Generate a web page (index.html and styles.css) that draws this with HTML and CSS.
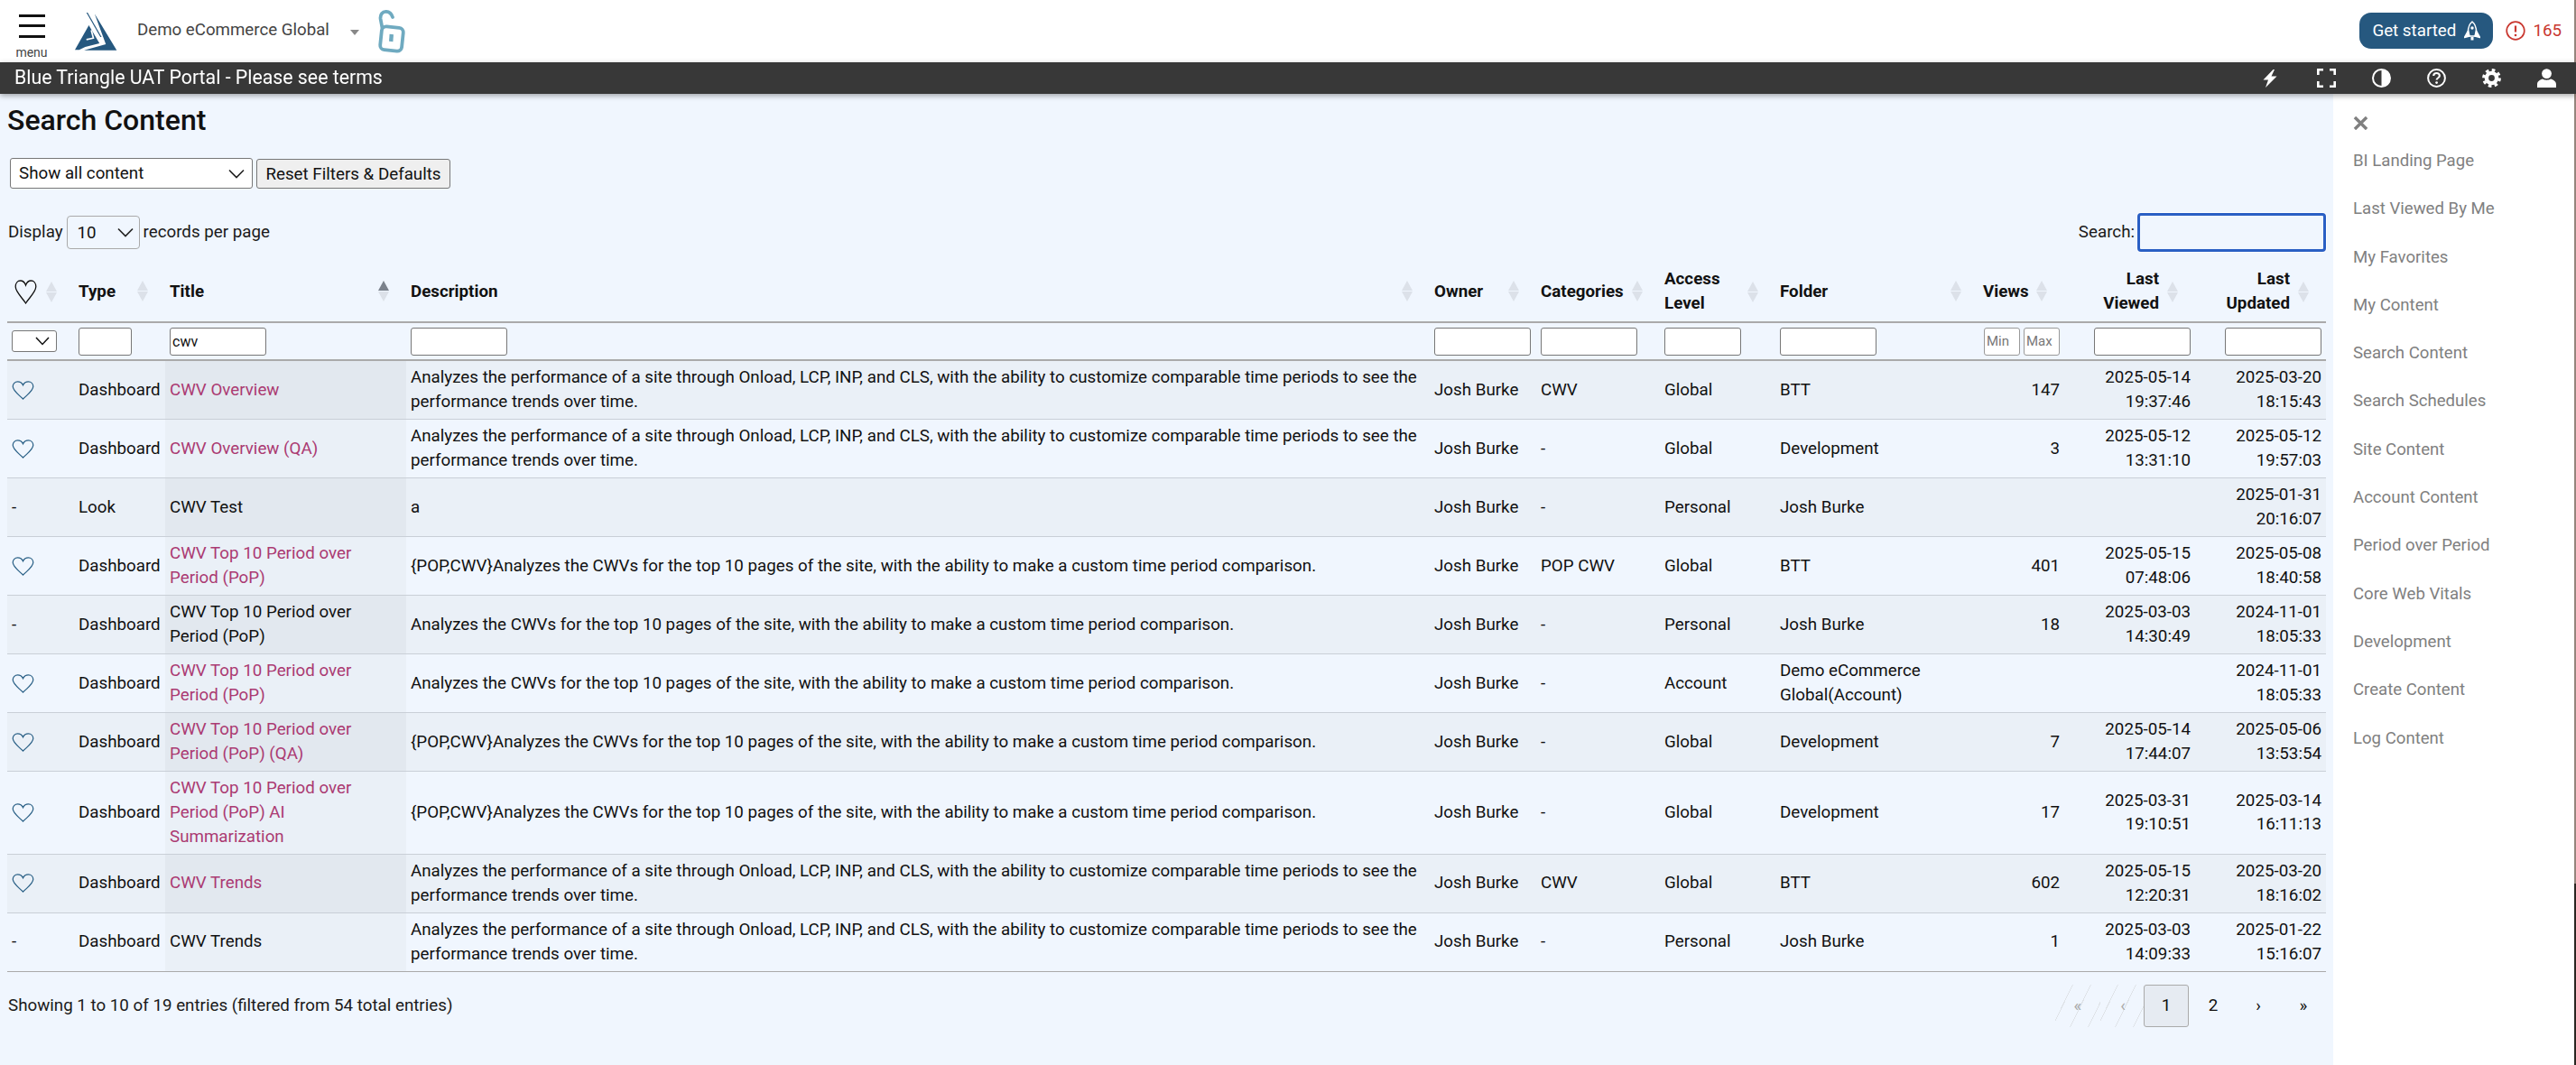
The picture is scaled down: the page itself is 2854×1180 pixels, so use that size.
FILE: index.html
```html
<!DOCTYPE html>
<html lang="en">
<head>
<meta charset="utf-8">
<title>Search Content</title>
<link rel="stylesheet" href="styles.css">
</head>
<body>
<svg class="defs" aria-hidden="true">
  <symbol id="heart" viewBox="0 0 26 22"><path d="M13 21 C8 16 1.2 11.5 1.2 6.6 C1.2 3.2 3.8 1 6.8 1 C9.4 1 11.8 2.6 13 5 C14.2 2.6 16.6 1 19.2 1 C22.2 1 24.8 3.2 24.8 6.6 C24.8 11.5 18 16 13 21 Z" fill="none" stroke="currentColor" stroke-width="1.3"/></symbol>
  <symbol id="heart-tall" viewBox="0 0 25 27" preserveAspectRatio="none"><path d="M12.5 26 C8 19 1.2 13.5 1.2 7.6 C1.2 3.6 3.6 1 6.6 1 C9.2 1 11.4 3 12.5 6 C13.6 3 15.8 1 18.4 1 C21.4 1 23.8 3.6 23.8 7.6 C23.8 13.5 17 19 12.5 26 Z" fill="none" stroke="currentColor" stroke-width="1.3"/></symbol>
  <symbol id="sort" viewBox="0 0 12 23"><polygon points="6,0 12,11 0,11" fill="#dce1e9"/><polygon points="0,12 12,12 6,23" fill="#dce1e9"/></symbol>
  <symbol id="sort-up" viewBox="0 0 12 23"><polygon points="6,0 12,11 0,11" fill="#7b828c"/><polygon points="0,12 12,12 6,23" fill="#dce1e9"/></symbol>
</svg>

<header class="topbar">
  <div class="menu">
    <span class="burger"><i></i><i></i><i></i></span>
    <span class="menu-label">menu</span>
  </div>
  <svg class="logo" viewBox="70 42 140 125">
    <polygon points="135,46 208,166 100,166 172,146" fill="#26587f"/>
    <polygon points="70,165 116,84 151,143 104,155 84,165" fill="#26587f"/>
    <polygon points="108,42 112,42 158,122 154,122" fill="#26587f"/>
    <path d="M124 100 L131 126 L108 131" fill="none" stroke="#fff" stroke-width="5"/>
  </svg>
  <span class="account">Demo eCommerce Global</span>
  <span class="caret"></span>
  <svg class="lock" viewBox="0 0 30 48" fill="none" stroke="#6faac0" stroke-width="3.8" stroke-linecap="round" stroke-linejoin="round">
    <path d="M4.5 20 L2.6 10 C2 4.5 5 2 8.5 1.9 C12 1.8 14.5 3.5 16 8"/>
    <rect x="3" y="19" width="24" height="26" rx="5" transform="rotate(6 15 32)"/>
    <path d="M14.8 27 L14.2 35" stroke-width="4.4" stroke-linecap="butt"/>
  </svg>
  <button class="get-started" type="button">Get started
    <svg class="rocket" viewBox="0 0 18 22" fill="none" stroke="#fff" stroke-width="1.5" stroke-linejoin="round">
      <path d="M9 1 C5.5 4 4.5 8 4.5 12 L5.5 17 H12.5 L13.5 12 C13.5 8 12.5 4 9 1 Z"/>
      <path d="M4.5 11 L.5 18.5 L6 17 Z M13.5 11 L17.5 18.5 L12 17 Z" fill="#fff"/>
      <circle cx="9" cy="8" r="1.7" fill="#fff" stroke="none"/>
      <path d="M7.5 18 H10.5 V21.5 H7.5 Z" fill="#fff" stroke="none"/>
    </svg>
  </button>
  <span class="alerts">
    <svg class="alert-icon" viewBox="0 0 22 22" fill="none" stroke="#c9372f" stroke-width="1.7"><circle cx="11" cy="11" r="9.8"/><path d="M11 5.5 V12.5" stroke-width="2.2"/><circle cx="11" cy="16" r="1.3" fill="#c9372f" stroke="none"/></svg>
    <span>165</span>
  </span>
</header>

<div class="darkbar">
  <span class="portal">Blue Triangle UAT Portal - Please see terms</span>
  <nav class="tools">
    <svg class="tool bolt" viewBox="0 0 16 20"><path d="M11.5 0 L.5 11.5 H6 L3 20 L15.5 7.5 H9.5 L13 0 Z" fill="#fff"/></svg>
    <svg class="tool" viewBox="0 0 21 21" fill="none" stroke="#fff" stroke-width="2.6"><path d="M1.3 7 V1.3 H7 M14 1.3 H19.7 V7 M19.7 14 V19.7 H14 M7 19.7 H1.3 V14"/></svg>
    <svg class="tool" viewBox="0 0 21 21"><circle cx="10.5" cy="10.5" r="9.5" fill="none" stroke="#fff" stroke-width="2"/><path d="M10.5 1 A9.5 9.5 0 0 1 10.5 20 Z" fill="#fff"/></svg>
    <svg class="tool" viewBox="0 0 21 21" fill="none" stroke="#fff"><circle cx="10.5" cy="10.5" r="9.4" stroke-width="2"/><path d="M7.2 8 C7.2 5.8 9 5 10.5 5 C12.4 5 13.9 6.2 13.9 8 C13.9 10.2 10.6 10.3 10.6 12.6" stroke-width="2.1"/><circle cx="10.6" cy="15.6" r="1.4" fill="#fff" stroke="none"/></svg>
    <svg class="tool" viewBox="0 0 21 21" fill="none" stroke="#fff"><circle cx="10.5" cy="10.5" r="5.6" stroke-width="4.4"/><circle cx="10.5" cy="10.5" r="8.9" stroke-width="3" stroke-dasharray="3.6 3.39"/></svg>
    <svg class="tool" viewBox="0 0 21 21" fill="#fff"><circle cx="10.5" cy="5.6" r="5.4"/><path d="M0 21 V17.5 C0 14 3.5 12.4 6 11.6 C8.5 13.2 12.5 13.2 15 11.6 C17.5 12.4 21 14 21 17.5 V21 Z"/></svg>
  </nav>
</div>

<div class="page">
  <main class="content">
    <h1>Search Content</h1>
    <div class="filters">
      <select class="select show-all"><option>Show all content</option></select>
      <button class="reset" type="button">Reset Filters &amp; Defaults</button>
    </div>
    <div class="controls">
      <label class="length">Display <select class="select per-page"><option>10</option></select> records per page</label>
      <label class="search">Search: <input class="search-input" type="text"></label>
    </div>

    <table class="grid">
      <colgroup>
        <col class="w-fav"><col class="w-type"><col class="w-title"><col class="w-desc"><col class="w-owner"><col class="w-cat"><col class="w-access"><col class="w-folder"><col class="w-views"><col class="w-date"><col class="w-date">
      </colgroup>
      <thead>
        <tr class="head">
          <th><div class="th"><svg class="fav-head"><use href="#heart-tall"/></svg><svg class="sort"><use href="#sort"/></svg></div></th>
          <th><div class="th"><span>Type</span><svg class="sort"><use href="#sort"/></svg></div></th>
          <th><div class="th"><span>Title</span><svg class="sort"><use href="#sort-up"/></svg></div></th>
          <th><div class="th"><span>Description</span><svg class="sort"><use href="#sort"/></svg></div></th>
          <th><div class="th"><span>Owner</span><svg class="sort"><use href="#sort"/></svg></div></th>
          <th><div class="th"><span>Categories</span><svg class="sort"><use href="#sort"/></svg></div></th>
          <th><div class="th"><span>Access<br>Level</span><svg class="sort"><use href="#sort"/></svg></div></th>
          <th><div class="th"><span>Folder</span><svg class="sort"><use href="#sort"/></svg></div></th>
          <th><div class="th"><span>Views</span><svg class="sort"><use href="#sort"/></svg></div></th>
          <th><div class="th end"><span>Last<br>Viewed</span><svg class="sort"><use href="#sort"/></svg></div></th>
          <th><div class="th end"><span>Last<br>Updated</span><svg class="sort"><use href="#sort"/></svg></div></th>
        </tr>
        <tr class="filter">
          <td><select class="mini"><option></option></select></td>
          <td><input class="f f-type" type="text"></td>
          <td><input class="f f-wide" type="text" value="cwv"></td>
          <td><input class="f f-wide" type="text"></td>
          <td><input class="f f-wide" type="text"></td>
          <td><input class="f f-wide" type="text"></td>
          <td><input class="f f-access" type="text"></td>
          <td><input class="f f-wide" type="text"></td>
          <td><span class="range"><input class="f f-range" type="text" placeholder="Min"><input class="f f-range" type="text" placeholder="Max"></span></td>
          <td class="num"><input class="f f-date" type="text"></td>
          <td class="num"><input class="f f-date" type="text"></td>
        </tr>
      </thead>
      <tbody>
        <tr>
          <td><svg class="fav"><use href="#heart"/></svg></td><td>Dashboard</td><td class="t"><a href="#">CWV Overview</a></td>
          <td>Analyzes the performance of a site through Onload, LCP, INP, and CLS, with the ability to customize comparable time periods to see the performance trends over time.</td>
          <td>Josh Burke</td><td>CWV</td><td>Global</td><td>BTT</td><td class="num">147</td><td class="num">2025-05-14 19:37:46</td><td class="num">2025-03-20 18:15:43</td>
        </tr>
        <tr>
          <td><svg class="fav"><use href="#heart"/></svg></td><td>Dashboard</td><td class="t"><a href="#">CWV Overview (QA)</a></td>
          <td>Analyzes the performance of a site through Onload, LCP, INP, and CLS, with the ability to customize comparable time periods to see the performance trends over time.</td>
          <td>Josh Burke</td><td>-</td><td>Global</td><td>Development</td><td class="num">3</td><td class="num">2025-05-12 13:31:10</td><td class="num">2025-05-12 19:57:03</td>
        </tr>
        <tr>
          <td>-</td><td>Look</td><td class="t">CWV Test</td>
          <td>a</td>
          <td>Josh Burke</td><td>-</td><td>Personal</td><td>Josh Burke</td><td class="num"></td><td class="num"></td><td class="num">2025-01-31 20:16:07</td>
        </tr>
        <tr>
          <td><svg class="fav"><use href="#heart"/></svg></td><td>Dashboard</td><td class="t"><a href="#">CWV Top 10 Period over Period (PoP)</a></td>
          <td>{POP,CWV}Analyzes the CWVs for the top 10 pages of the site, with the ability to make a custom time period comparison.</td>
          <td>Josh Burke</td><td>POP CWV</td><td>Global</td><td>BTT</td><td class="num">401</td><td class="num">2025-05-15 07:48:06</td><td class="num">2025-05-08 18:40:58</td>
        </tr>
        <tr>
          <td>-</td><td>Dashboard</td><td class="t">CWV Top 10 Period over Period (PoP)</td>
          <td>Analyzes the CWVs for the top 10 pages of the site, with the ability to make a custom time period comparison.</td>
          <td>Josh Burke</td><td>-</td><td>Personal</td><td>Josh Burke</td><td class="num">18</td><td class="num">2025-03-03 14:30:49</td><td class="num">2024-11-01 18:05:33</td>
        </tr>
        <tr>
          <td><svg class="fav"><use href="#heart"/></svg></td><td>Dashboard</td><td class="t"><a href="#">CWV Top 10 Period over Period (PoP)</a></td>
          <td>Analyzes the CWVs for the top 10 pages of the site, with the ability to make a custom time period comparison.</td>
          <td>Josh Burke</td><td>-</td><td>Account</td><td>Demo eCommerce Global(Account)</td><td class="num"></td><td class="num"></td><td class="num">2024-11-01 18:05:33</td>
        </tr>
        <tr>
          <td><svg class="fav"><use href="#heart"/></svg></td><td>Dashboard</td><td class="t"><a href="#">CWV Top 10 Period over Period (PoP) (QA)</a></td>
          <td>{POP,CWV}Analyzes the CWVs for the top 10 pages of the site, with the ability to make a custom time period comparison.</td>
          <td>Josh Burke</td><td>-</td><td>Global</td><td>Development</td><td class="num">7</td><td class="num">2025-05-14 17:44:07</td><td class="num">2025-05-06 13:53:54</td>
        </tr>
        <tr>
          <td><svg class="fav"><use href="#heart"/></svg></td><td>Dashboard</td><td class="t"><a href="#">CWV Top 10 Period over Period (PoP) AI Summarization</a></td>
          <td>{POP,CWV}Analyzes the CWVs for the top 10 pages of the site, with the ability to make a custom time period comparison.</td>
          <td>Josh Burke</td><td>-</td><td>Global</td><td>Development</td><td class="num">17</td><td class="num">2025-03-31 19:10:51</td><td class="num">2025-03-14 16:11:13</td>
        </tr>
        <tr>
          <td><svg class="fav"><use href="#heart"/></svg></td><td>Dashboard</td><td class="t"><a href="#">CWV Trends</a></td>
          <td>Analyzes the performance of a site through Onload, LCP, INP, and CLS, with the ability to customize comparable time periods to see the performance trends over time.</td>
          <td>Josh Burke</td><td>CWV</td><td>Global</td><td>BTT</td><td class="num">602</td><td class="num">2025-05-15 12:20:31</td><td class="num">2025-03-20 18:16:02</td>
        </tr>
        <tr>
          <td>-</td><td>Dashboard</td><td class="t">CWV Trends</td>
          <td>Analyzes the performance of a site through Onload, LCP, INP, and CLS, with the ability to customize comparable time periods to see the performance trends over time.</td>
          <td>Josh Burke</td><td>-</td><td>Personal</td><td>Josh Burke</td><td class="num">1</td><td class="num">2025-03-03 14:09:33</td><td class="num">2025-01-22 15:16:07</td>
        </tr>
      </tbody>
    </table>

    <div class="footer">
      <span>Showing 1 to 10 of 19 entries (filtered from 54 total entries)</span>
      <div class="pager">
        <span class="pg off">«</span>
        <span class="pg off">‹</span>
        <span class="pg on">1</span>
        <span class="pg num-pg">2</span>
        <span class="pg">›</span>
        <span class="pg">»</span>
      </div>
    </div>
  </main>

  <aside class="side">
    <svg class="close" viewBox="0 0 17 16" stroke="#808080" stroke-width="3.6"><path d="M1.5 1 L15.5 15 M15.5 1 L1.5 15"/></svg>
    <a href="#">BI Landing Page</a>
    <a href="#">Last Viewed By Me</a>
    <a href="#">My Favorites</a>
    <a href="#">My Content</a>
    <a href="#">Search Content</a>
    <a href="#">Search Schedules</a>
    <a href="#">Site Content</a>
    <a href="#">Account Content</a>
    <a href="#">Period over Period</a>
    <a href="#">Core Web Vitals</a>
    <a href="#">Development</a>
    <a href="#">Create Content</a>
    <a href="#">Log Content</a>
  </aside>
</div>
<div class="edge"></div>
</body>
</html>
```

FILE: styles.css
```css
* { box-sizing: border-box; }
html, body { height: 100%; }
body {
  margin: 0;
  height: 1180px;
  overflow: hidden;
  font-family: Roboto, "Liberation Sans", sans-serif;
  font-size: 18.75px;
  line-height: 26.7px;
  color: #1a1a1a;
  background: #fff;
}
.defs { width: 0; height: 0; position: absolute; }

/* top bar */
.topbar {
  height: 69px;
  display: flex;
  align-items: center;
  padding-left: 20px;
  padding-right: 16px;
  background: #fff;
}
.menu { width: 30px; height: 62px; display: flex; flex-direction: column; align-items: center; margin-top: 4px; }
.burger { width: 29px; height: 26px; margin-top: 10px; display: flex; flex-direction: column; justify-content: space-between; }
.burger i { display: block; height: 3px; background: #111; }
.menu-label { font-size: 14px; line-height: 16px; margin-top: 8px; color: #444; white-space: nowrap; }
.logo { width: 47px; height: 42px; margin-left: 33px; margin-top: 1px; }
.account { margin-left: 22px; color: #444; font-size: 18.7px; margin-top: -3px; }
.caret { width: 0; height: 0; margin-left: 23px; margin-top: 3px; border-left: 5px solid transparent; border-right: 5px solid transparent; border-top: 6px solid #888; }
.lock { width: 30px; height: 48px; margin-left: 21px; }
.get-started {
  margin-left: auto;
  width: 148px;
  height: 40px;
  margin-top: -1px;
  border: 0;
  border-radius: 13px;
  background: #26587f;
  color: #fff;
  font: 400 18.75px Roboto, sans-serif;
  display: flex;
  align-items: center;
  justify-content: space-between;
  padding: 0 14px;
}
.rocket { width: 18px; height: 22px; }
.alerts { display: flex; align-items: center; gap: 8px; margin-left: 14px; color: #c9372f; font-size: 18.75px; }
.alert-icon { width: 22px; height: 22px; }

/* dark bar */
.darkbar {
  position: relative;
  z-index: 2;
  height: 35px;
  background: #383838;
  color: #fff;
  display: flex;
  align-items: center;
  justify-content: space-between;
  padding: 0 22px 0 16px;
  box-shadow: 0 2px 6px rgba(0, 0, 0, .35);
}
.portal { font-size: 21.3px; }
.tools { display: flex; gap: 40px; align-items: center; }
.tool { width: 21px; height: 21px; }
.bolt { width: 16px; height: 20px; margin-right: 4px; }

/* page */
.page { display: flex; height: 1076px; }
.content { flex: 1; min-width: 0; padding: 0 8px; background: #f0f6fe; }
h1 { margin: 9px 0 0; font-size: 32px; line-height: 40px; font-weight: 500; color: #111; }
.filters { display: flex; align-items: flex-end; gap: 4px; margin: 22px 0 0 3px; }
.select {
  appearance: none;
  font: 400 18.75px Roboto, sans-serif;
  color: #111;
  background: #fff url("data:image/svg+xml,%3Csvg xmlns='http://www.w3.org/2000/svg' width='18' height='11'%3E%3Cpath d='M1 1.5 L9 9.5 L17 1.5' fill='none' stroke='%23222' stroke-width='1.6'/%3E%3C/svg%3E") no-repeat right 8px center;
  border: 1px solid #777;
  border-radius: 3px;
}
.show-all { width: 269px; height: 34px; padding-left: 9px; }
.reset {
  width: 215px;
  height: 33px;
  padding: 0;
  font: 400 18.75px Roboto, sans-serif;
  color: #111;
  background: #efefef;
  border: 1px solid #777;
  border-radius: 3px;
}
.controls { display: flex; justify-content: space-between; align-items: center; height: 43px; margin-top: 27px; }
.length { margin-left: 1px; display: flex; align-items: center; gap: 4px; }
.per-page { width: 81px; height: 37px; padding-left: 11px; background-color: transparent; border-color: #aaa; border-radius: 4px; background-position: right 6px center; }
.search { display: flex; align-items: center; gap: 3px; }
.search-input { width: 209px; height: 43px; border: 3px solid #2a5fc4; border-radius: 4px; background: #f0f6fe; box-shadow: 0 0 0 1px #fff; outline: none; }

/* table */
.grid { width: 2569px; table-layout: fixed; border-collapse: collapse; margin-top: 11px; }
.w-fav { width: 74px; } .w-type { width: 101px; } .w-title { width: 267px; } .w-desc { width: 1134px; }
.w-owner { width: 118px; } .w-cat { width: 137px; } .w-access { width: 128px; } .w-folder { width: 225px; }
.w-views { width: 95px; } .w-date { width: 145px; }
.head th { height: 67px; padding: 0 19px 0 5px; text-align: left; font-weight: 700; border-bottom: 2px solid #aaa; color: #111; }
.th { display: flex; align-items: center; justify-content: space-between; }
.th.end { justify-content: flex-end; gap: 9px; text-align: right; }
.sort { width: 12px; height: 23px; flex: none; }
.fav-head { width: 25px; height: 27px; color: #111; margin-left: 3px; }
.filter td { height: 42px; padding: 0 5px; border-bottom: 2px solid #aaa; }
.f { display: block; height: 31px; padding: 0 2px; font: 400 16px Roboto, sans-serif; color: #111; border: 1px solid #777; border-radius: 3px; background: #fff; }
.num .f { margin-left: auto; }
.f-type { width: 59px; }
.f-wide { width: 107px; }
.f-access { width: 85px; }
.f-date { width: 107px; }
.range { display: flex; gap: 4px; margin-left: 1px; }
.f-range { width: 40px; font-size: 15px; border-color: #999; }
.f-range::placeholder { color: #777; }
.mini { display: block; width: 50px; height: 24px; appearance: none; margin-left: 0; border: 1px solid #777; border-radius: 3px; background: #fff url("data:image/svg+xml,%3Csvg xmlns='http://www.w3.org/2000/svg' width='16' height='10'%3E%3Cpath d='M1 1 L8 8.5 L15 1' fill='none' stroke='%23111' stroke-width='1.5'/%3E%3C/svg%3E") no-repeat right 7px center; }
tbody td { padding: 5.3px 5px; border-bottom: 1px solid #c9cfd7; vertical-align: middle; color: #111; }
tbody tr:last-child td { border-bottom: 1px solid #aaa; }
tbody tr:nth-child(odd) td { background: #eaf0f7; }
tbody tr:nth-child(odd) td.t { background: #e2e8ef; }
tbody tr:nth-child(even) td.t { background: #eaf0f7; }
.num { text-align: right; }
.grid a { color: #ab3a72; text-decoration: none; }
.fav { display: block; width: 25px; height: 21px; color: #2a6086; }

/* footer */
.footer { display: flex; justify-content: space-between; align-items: center; padding: 14px 0 0 1px; }
.pager { display: flex; }
.pg { width: 50px; height: 47px; display: flex; align-items: center; justify-content: center; color: #111; }
.pg.off { color: #aaa; background: repeating-linear-gradient(116deg, transparent 0 17px, #dfe3e8 17px 18px); }
.pg.on { background: #e6ebf2; border: 1px solid #aaa; border-radius: 3px; margin-left: -2px; margin-right: 2px; }

/* side */
.side { width: 269px; background: #fff; padding: 25px 0 0 22px; }
.close { display: block; width: 17px; height: 15px; margin-bottom: 8px; }
.side a { display: block; line-height: 53.3px; color: #808080; text-decoration: none; font-size: 18.6px; }

.edge { position: fixed; top: 0; right: 0; bottom: 0; width: 2px; background: linear-gradient(#95857d 0 83%, #2a2622 83%); }
```
